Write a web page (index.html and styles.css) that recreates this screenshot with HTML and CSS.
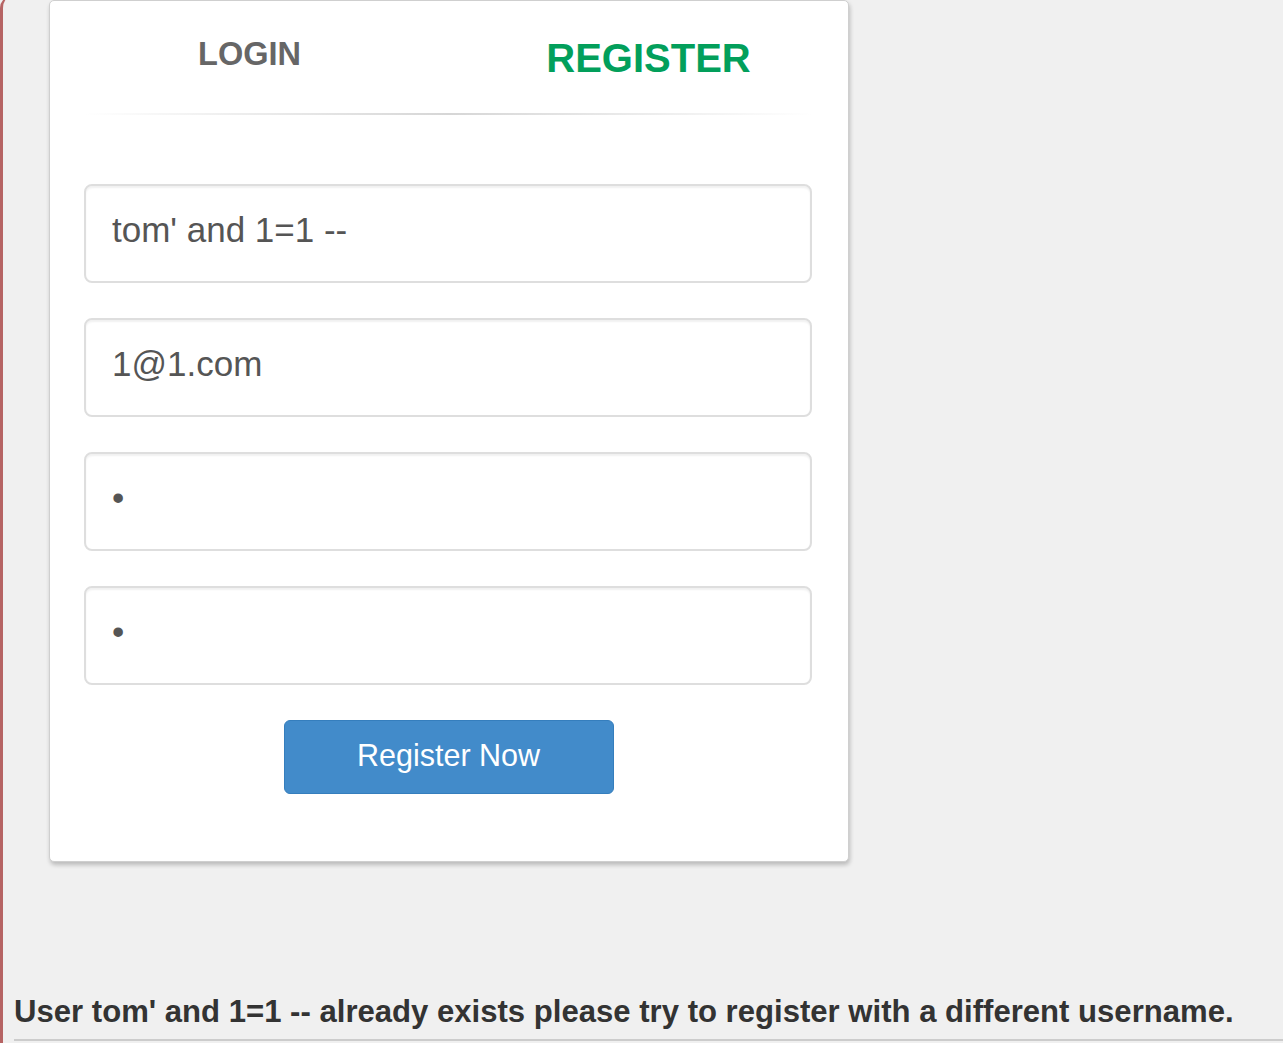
FILE: index.html
```html
<!DOCTYPE html>
<html>
<head>
<meta charset="utf-8">
<title>Register</title>
<link rel="stylesheet" href="styles.css">
</head>
<body>
<div class="frame">
  <div class="card">
    <div class="tabs">
      <a class="tab">LOGIN</a>
      <a class="tab active">REGISTER</a>
    </div>
    <div class="separator"></div>
    <form class="form">
      <input class="field" type="text" value="tom' and 1=1 --">
      <input class="field" type="text" value="1@1.com">
      <input class="field" type="password" value="1">
      <input class="field" type="password" value="1">
      <div class="actions">
        <button type="button" class="btn">Register Now</button>
      </div>
    </form>
  </div>
  <div class="message">User tom' and 1=1 -- already exists please try to register with a different username.</div>
</div>
</body>
</html>
```
FILE: styles.css
```css
html, body {
  margin: 0;
  padding: 0;
  background: #f0f0f0;
  overflow: hidden;
}
body {
  font-family: "Liberation Sans", Arial, sans-serif;
}
.frame {
  margin-top: -4px;
  padding-top: 4px;
  min-height: 1060px;
  border-left: 3px solid #b66464;
  border-radius: 12px;
  box-sizing: border-box;
}
.card {
  margin-left: 46px;
  width: 800px;
  box-sizing: border-box;
  background: #fff;
  border: 1px solid #cfcfcf;
  border-radius: 5px;
  box-shadow: 1px 3px 4px rgba(0, 0, 0, 0.22);
  padding-bottom: 67px;
}
.tabs {
  display: flex;
  align-items: flex-start;
  padding-top: 35px;
}
.tab {
  flex: 1;
  text-align: center;
  font-weight: bold;
  font-size: 32.5px;
  color: #666;
  text-decoration: none;
}
.tab.active {
  font-size: 40px;
  color: #029f5b;
}
.separator {
  margin: 32px 35px 0 34px;
  height: 2px;
  background: linear-gradient(to right, rgba(221,221,221,0), #d6d6d6 50%, rgba(221,221,221,0));
}
.form {
  display: flex;
  flex-direction: column;
  padding: 69px 35px 0 34px;
}
.field {
  display: block;
  box-sizing: border-box;
  width: 728px;
  height: 99px;
  margin: 0 0 35px;
  padding: 0 26px 8px;
  border: 2px solid #dedede;
  border-radius: 8px;
  box-shadow: inset 0 2px 2px rgba(0, 0, 0, 0.06);
  font-family: "Liberation Sans", Arial, sans-serif;
  font-size: 35px;
  color: #555;
  background: #fff;
  outline: none;
}
.actions {
  display: flex;
  justify-content: center;
}
.btn {
  width: 330px;
  height: 74px;
  box-sizing: border-box;
  background: #428bca;
  border: 1px solid #357ebd;
  border-radius: 6px;
  color: #fff;
  font-family: "Liberation Sans", Arial, sans-serif;
  font-size: 30.5px;
  padding: 0 0 4px;
}
.message {
  margin: 132px 0 0 11px;
  padding-bottom: 10px;
  border-bottom: 2px solid #cccccc;
  font-size: 31.1px;
  line-height: 35px;
  font-weight: bold;
  color: #333;
}
```
